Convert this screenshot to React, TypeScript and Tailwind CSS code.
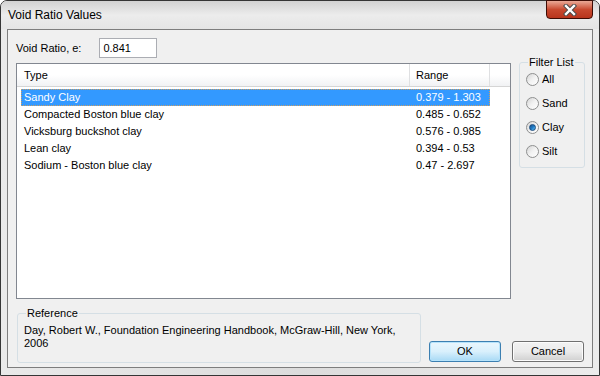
import { useState } from 'react';

const rows = [
    { type: 'Sandy Clay', range: '0.379 - 1.303' },
    { type: 'Compacted Boston blue clay', range: '0.485 - 0.652' },
    { type: 'Vicksburg buckshot clay', range: '0.576 - 0.985' },
    { type: 'Lean clay', range: '0.394 - 0.53' },
    { type: 'Sodium - Boston blue clay', range: '0.47 - 2.697' }
];

const filters = ['All', 'Sand', 'Clay', 'Silt'];

const Radio = ({ label, checked, onClick }: { label: string; checked: boolean; onClick: () => void }) => (
    <div className="flex items-center h-[24px] cursor-default" onClick={onClick}>
        <span className="w-[13px] h-[13px] rounded-full border border-[#8e8f8f] bg-gradient-to-br from-[#d4d4d4] via-[#f2f2f2] to-white flex items-center justify-center">
            {checked && (
                <span className="w-[7px] h-[7px] rounded-full bg-gradient-to-br from-[#1b4e86] via-[#1f79c4] to-[#5ec3f5] border border-[#184a7f]" />
            )}
        </span>
        <span className="ml-[3px]">{label}</span>
    </div>
);

const CloseX = () => (
    <svg width="14" height="12" viewBox="0 0 14 12">
        <path d="M3 2 L11 10 M11 2 L3 10" stroke="#4a4a4a" strokeWidth="4.4" strokeLinecap="square" fill="none" />
        <path d="M3 2 L11 10 M11 2 L3 10" stroke="#ffffff" strokeWidth="2.4" strokeLinecap="square" fill="none" />
    </svg>
);

const App = () => {
    const [filter, setFilter] = useState('Clay');
    const [selected, setSelected] = useState(0);

    return (
        <div className="w-[600px] h-[376px] bg-white font-['Liberation_Sans',sans-serif] text-[11px] text-black">
            <div className="w-full h-full flex flex-col rounded-t-[7px] border border-[#353535] bg-gradient-to-r from-[#e9e9e9] via-[#dcdcdc] to-[#ececec]">
                {/* title bar */}
                <div className="h-[28px] flex items-start pl-[7px] pr-[6px] bg-gradient-to-b from-[#d2d2d2] via-[#ececec] to-[#e4e4e4] rounded-t-[6px]">
                    <span className="mt-[6px] text-[12px] leading-[16px]">Void Ratio Values</span>
                    <div className="ml-auto w-[47px] h-[19px] -mt-[1px] rounded-b-[4px] border border-[#3d0c05] bg-gradient-to-b from-[#e9a896] via-[#c8492f] to-[#b8341c] flex items-center justify-center">
                        <CloseX />
                    </div>
                </div>

                {/* client area */}
                <div className="mx-[6px] h-[339px] border border-[#7d7d7d] bg-[#f0f0f0] flex flex-col pl-[8px]">
                    <div className="flex items-center mt-[8px] h-[20px]">
                        <span>Void Ratio, e:</span>
                        <input
                            readOnly
                            value="0.841"
                            className="ml-[18px] w-[58px] h-[20px] border border-[#abadb3] bg-white px-[3px] text-[11px] outline-none font-['Liberation_Sans',sans-serif]"
                        />
                    </div>

                    <div className="flex items-start mt-[5px]">
                        <div className="w-[495px] h-[236px] border border-[#828790] bg-white flex flex-col">
                            <div className="flex h-[23px] border-b border-[#d5d5d5] bg-gradient-to-b from-white via-white to-[#f1f2f4]">
                                <div className="w-[393px] pl-[7px] pt-[1px] flex items-center border-r border-[#dfe0e2]">Type</div>
                                <div className="w-[80px] pl-[6px] pt-[1px] flex items-center border-r border-[#dfe0e2]">Range</div>
                                <div className="flex-1" />
                            </div>
                            <div className="mt-[2px] pl-[4px] flex flex-col">
                                {rows.map((r, i) => (
                                    <div
                                        key={r.type}
                                        onClick={() => setSelected(i)}
                                        className={
                                            i === selected
                                                ? 'flex h-[17px] w-[469px] items-center bg-[#3399ff] text-white border border-dotted border-[#cc9e62]'
                                                : 'flex h-[17px] w-[469px] items-center border border-transparent'
                                        }
                                    >
                                        <div className="w-[388px] pl-[2px]">{r.type}</div>
                                        <div className="pl-[6px]">{r.range}</div>
                                    </div>
                                ))}
                            </div>
                        </div>

                        <fieldset className="ml-[8px] -mt-[7px] w-[66px] h-[112px] border border-[#d5dfe5] rounded-[3px] pl-[6px]">
                            <legend className="ml-[2px] px-[1px] leading-[13px]">Filter List</legend>
                            <div className="-mt-[2px] flex flex-col">
                                {filters.map((f) => (
                                    <Radio key={f} label={f} checked={filter === f} onClick={() => setFilter(f)} />
                                ))}
                            </div>
                        </fieldset>
                    </div>

                    <div className="flex items-start mt-[8px]">
                        <fieldset className="ml-[1px] w-[404px] h-[56px] border border-[#d5dfe5] rounded-[3px] pl-[6px]">
                            <legend className="ml-[2px] px-[1px] leading-[13px]">Reference</legend>
                            <div className="mt-[4px] leading-[13px]">
                                Day, Robert W., Foundation Engineering Handbook, McGraw-Hill, New York,
                                <br />
                                2006
                            </div>
                        </fieldset>
                        <button className="ml-[8px] mt-[34px] w-[72px] h-[21px] rounded-[3px] border border-[#3c7fb1] bg-gradient-to-b from-[#eaf6fd] via-[#d9f0fc] to-[#a7d9f5] shadow-[inset_0_0_0_1px_#b6e3fb]">
                            OK
                        </button>
                        <button className="ml-[11px] mt-[34px] w-[72px] h-[21px] rounded-[3px] border border-[#707070] bg-gradient-to-b from-[#f2f2f2] via-[#ebebeb] to-[#d0d0d0] shadow-[inset_0_0_0_1px_#fcfcfc]">
                            Cancel
                        </button>
                    </div>
                </div>
            </div>
        </div>
    );
};

export default App;
